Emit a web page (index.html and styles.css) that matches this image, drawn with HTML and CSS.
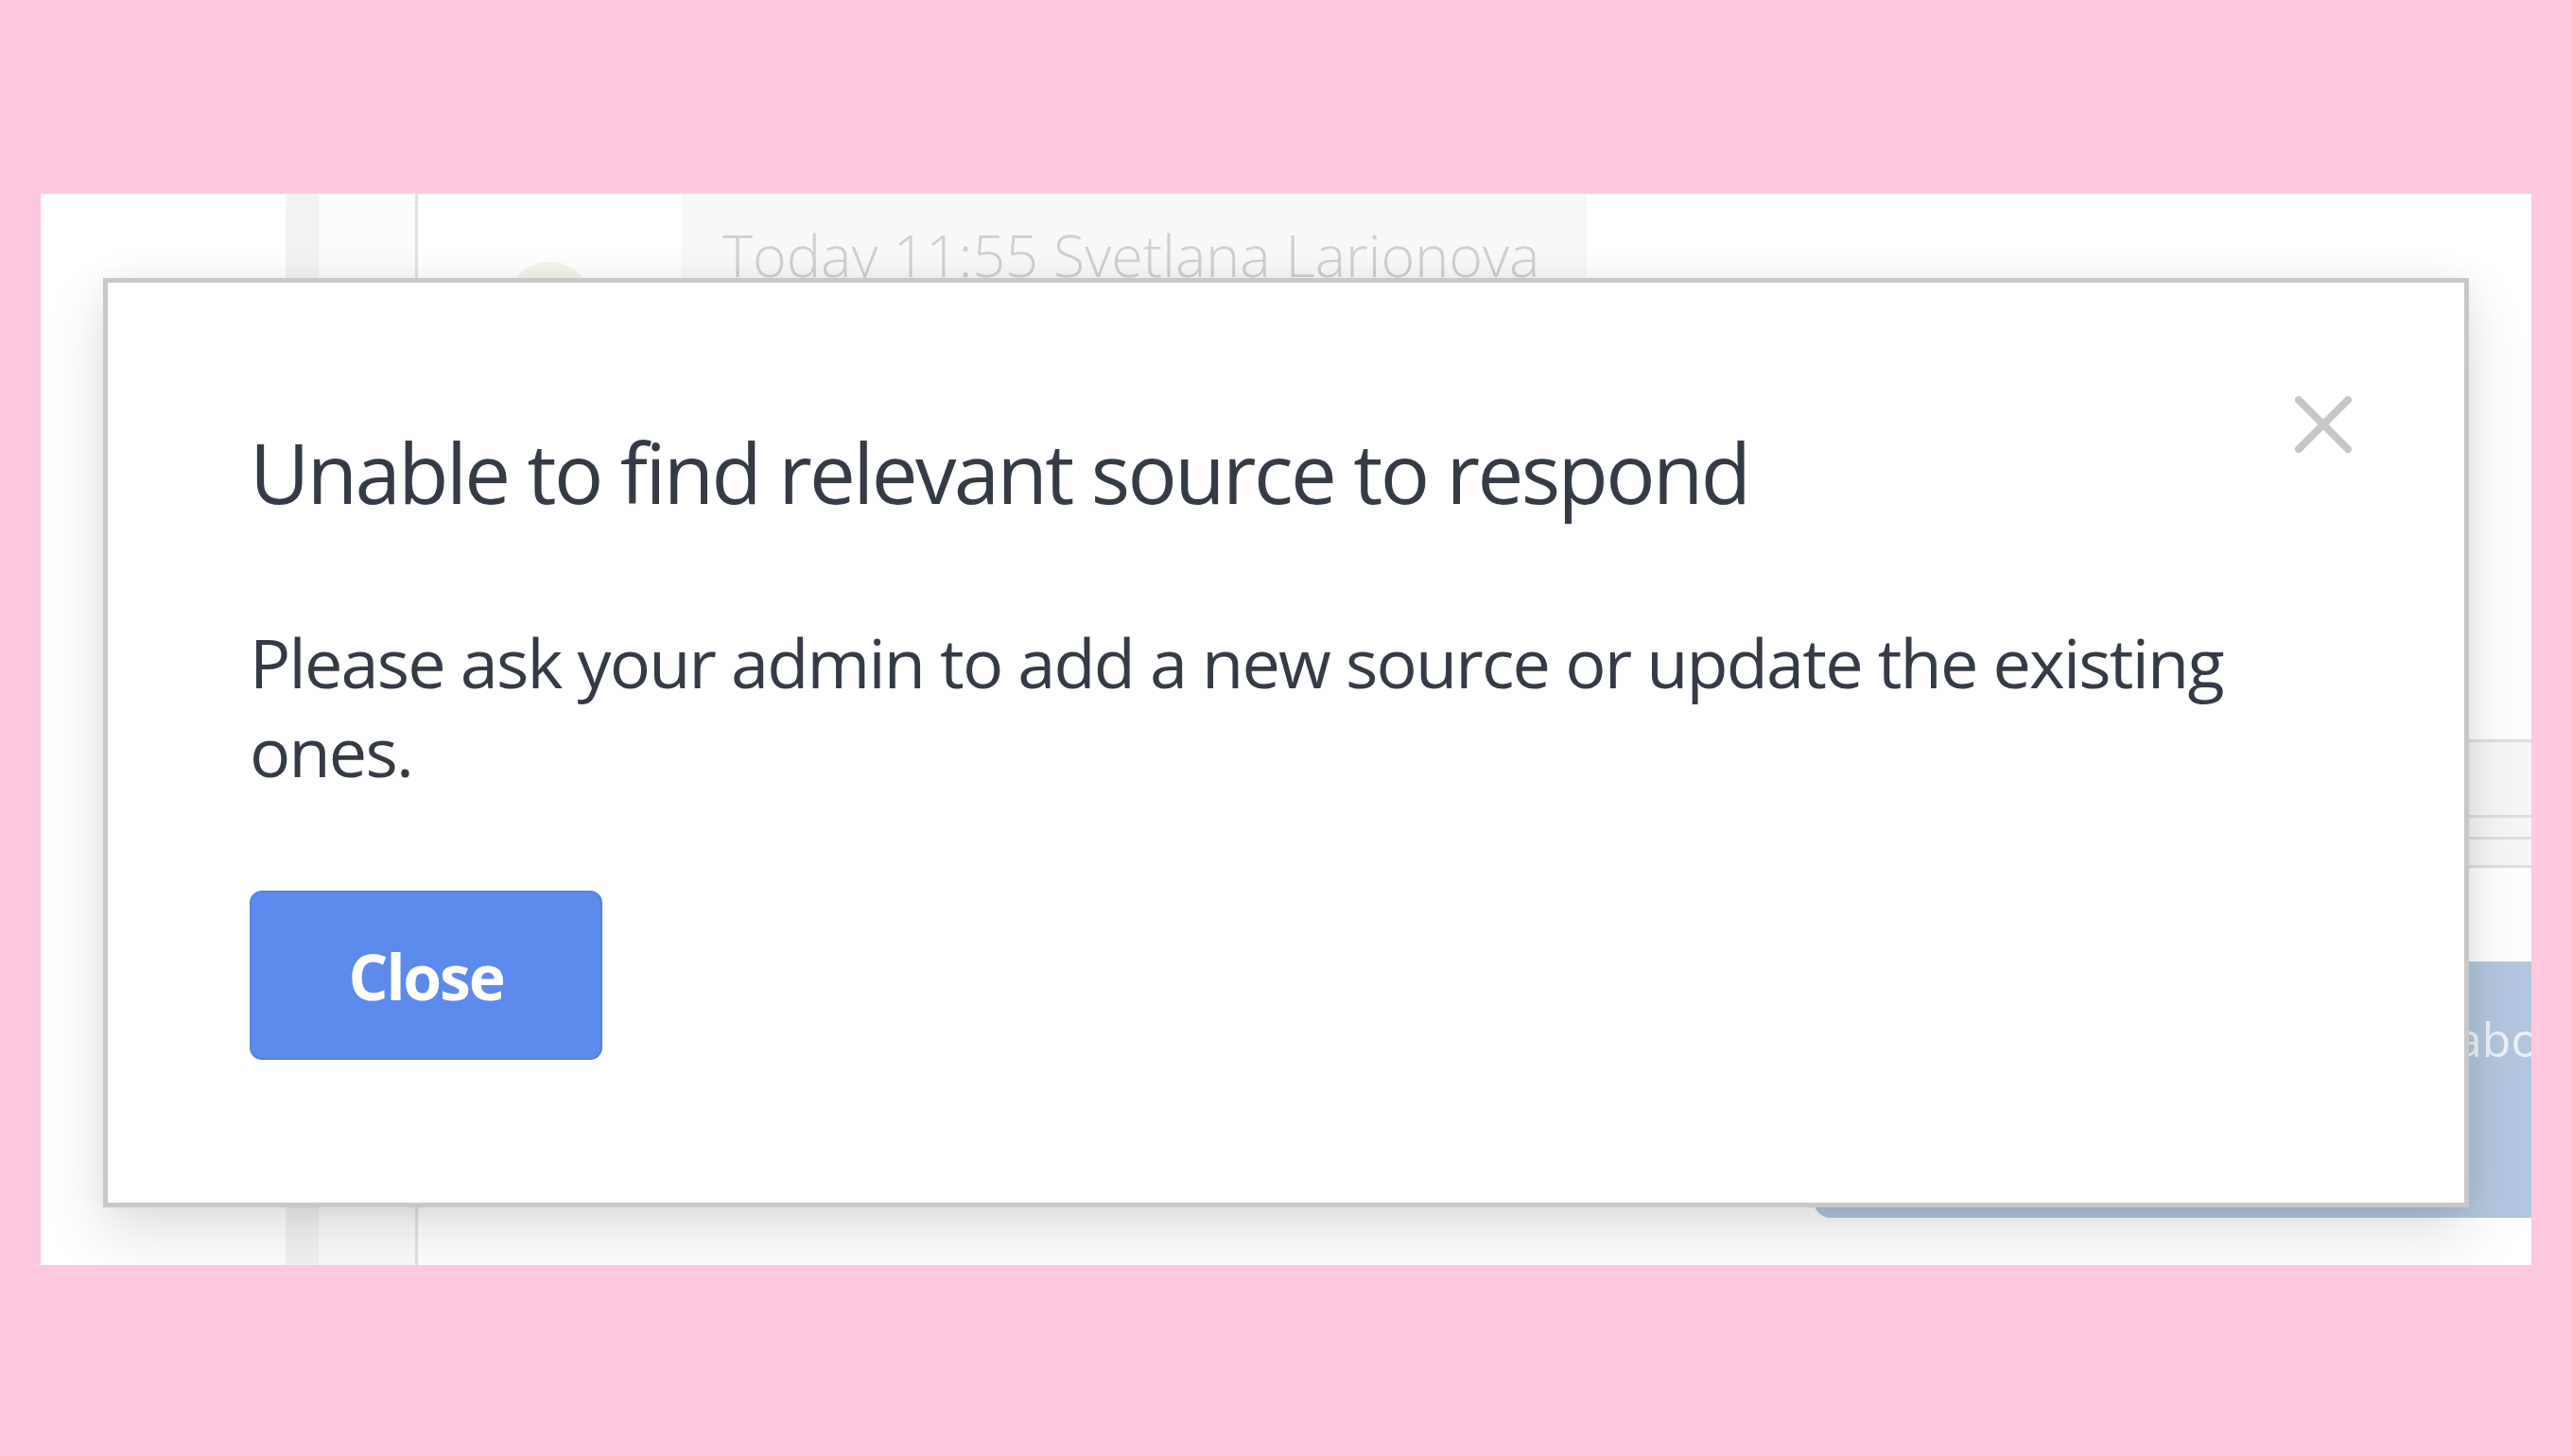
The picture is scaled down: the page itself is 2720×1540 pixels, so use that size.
FILE: index.html
```html
<!DOCTYPE html>
<html lang="en">

<head>
    <meta charset="UTF-8">
    <title>Unable to find relevant source</title>
    <link rel="stylesheet" href="styles.css">
</head>

<body>
    <div class="frame">
        <div class="app">
            <aside class="nav"></aside>
            <div class="rail"></div>
            <div class="list"></div>
            <main class="chat">
                <div class="chat-head">
                    <div class="avatar"></div>
                    <div class="meta">Today 11:55 Svetlana Larionova</div>
                </div>
                <div class="panel">
                    <div class="panel-row tall"></div>
                    <div class="panel-row"></div>
                    <div class="panel-row mid"></div>
                </div>
                <div class="bubble">Tell me more about</div>
            </main>
        </div>

        <div class="modal">
            <button class="modal-x" aria-label="Close">
                <svg width="60" height="60" viewBox="0 0 60 60">
                    <path d="M4 4 L56 56 M56 4 L4 56" stroke="#c7c7c7" stroke-width="8" stroke-linecap="round" fill="none"/>
                </svg>
            </button>
            <h2 class="modal-title">Unable to find relevant source to respond</h2>
            <p class="modal-text">Please ask your admin to add a new source or update the existing ones.</p>
            <button class="btn-close">Close</button>
        </div>
    </div>
</body>

</html>
```

FILE: styles.css
```css
body {
    margin: 0;
    background-color: #fec9e0;
    font-family: "Open Sans", "Noto Sans", sans-serif;
}

.frame {
    position: relative;
    width: 2634px;
    height: 1133px;
    margin: 205px 0 0 43px;
    background-color: #fff;
    overflow: hidden;
}

/* app behind the modal */
.app {
    display: flex;
    height: 100%;
}

.nav {
    flex-shrink: 0;
    width: 259px;
    background-color: #fff;
}

.rail {
    flex-shrink: 0;
    width: 35px;
    background-color: #f2f2f2;
}

.list {
    flex-shrink: 0;
    width: 102px;
    border-right: 3px solid #e2e2e2;
    background-color: #fbfbfb;
}

.chat {
    flex: 1;
    min-width: 0;
    display: flex;
    flex-direction: column;
}

.chat-head {
    display: flex;
    align-items: flex-start;
    height: 164px;
}

.avatar {
    flex-shrink: 0;
    width: 92px;
    height: 92px;
    margin: 72px 0 0 93px;
    border-radius: 50%;
    background-color: #f4f4ec;
}

.meta {
    flex-shrink: 0;
    height: 180px;
    margin: -40px 0 0 93px;
    padding: 77px 50px 0 44px;
    border-radius: 22px;
    background-color: #f8f8f8;
    color: #cfcfcf;
    font-size: 61px;
    font-weight: 300;
    line-height: 56px;
    white-space: nowrap;
}

.panel {
    align-self: flex-end;
    width: 420px;
    margin-top: 413px;
    border-top: 3px solid #dedede;
    background-color: #f6f6f6;
}

.panel-row {
    height: 20px;
    border-bottom: 3px solid #dedede;
}

.panel-row.tall {
    height: 77px;
}

.panel-row.mid {
    height: 27px;
}

.bubble {
    flex-shrink: 0;
    width: 900px;
    height: 271px;
    margin: 99px 0 0 1476px;
    padding: 48px 0 0 360px;
    box-sizing: border-box;
    border-radius: 18px;
    background-color: #b2c7df;
    color: #eef2f7;
    font-size: 50px;
    white-space: nowrap;
}

/* modal */
.modal {
    position: absolute;
    left: 66px;
    top: 89px;
    width: 2502px;
    height: 983px;
    box-sizing: border-box;
    padding: 141px 150px 0;
    border: 5px solid #c8c8c8;
    background-color: #fff;
    box-shadow: 0 28px 60px rgba(0, 0, 0, 0.12), 0 0 30px rgba(0, 0, 0, 0.05);
    color: #353b46;
}

.modal-x {
    position: absolute;
    top: 120px;
    right: 119px;
    width: 60px;
    height: 60px;
    padding: 0;
    border: none;
    background: none;
    cursor: pointer;
}

.modal-x svg {
    display: block;
}

.modal-title {
    margin: 0;
    font-size: 87px;
    font-weight: 400;
    letter-spacing: -2.6px;
    line-height: 1.36;
}

.modal-text {
    margin: 95px 0 0;
    font-size: 72px;
    letter-spacing: -1.8px;
    line-height: 94px;
}

.btn-close {
    display: block;
    width: 373px;
    height: 179px;
    margin-top: 101px;
    border: 2px solid #5481e2;
    border-radius: 13px;
    background-color: #5c8aed;
    color: #fff;
    font-family: "Open Sans", "Noto Sans", sans-serif;
    font-size: 66px;
    font-weight: 700;
    letter-spacing: -2.2px;
    cursor: pointer;
}
```
